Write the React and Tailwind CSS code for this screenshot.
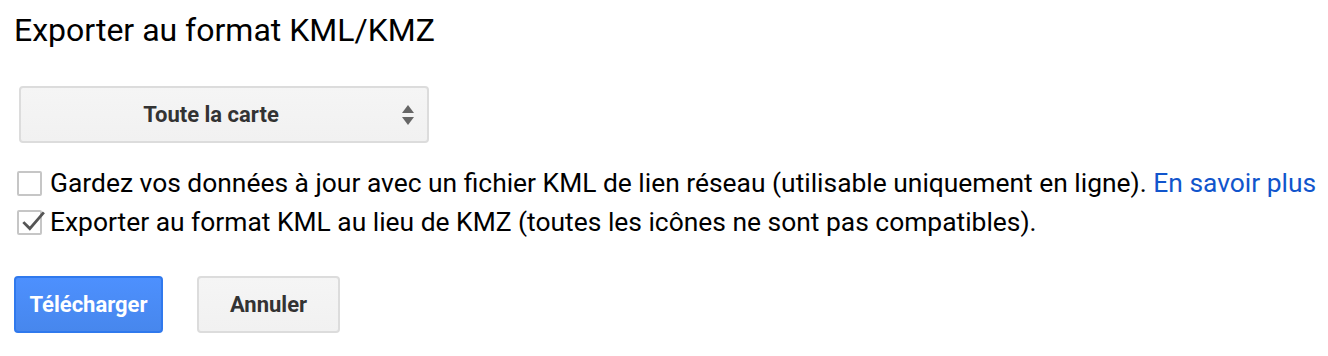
import React, { useState } from 'react';

const Checkbox = ({ checked, onChange }) => (
  <button
    onClick={onChange}
    className="relative w-[25px] h-[25px] shrink-0 border-2 border-[#c6c6c6] rounded-[2px] bg-white"
  >
    {checked && (
      <svg viewBox="0 0 25 25" className="absolute left-[0px] top-[-5px] w-[27px] h-[27px]">
        <path d="M4 14 L10 20 L23 5" fill="none" stroke="#555" strokeWidth="2.6" />
      </svg>
    )}
  </button>
);

export default function App() {
  const [linkKml, setLinkKml] = useState(false);
  const [asKml, setAsKml] = useState(true);

  return (
    <div className="w-[1328px] h-[356px] bg-white text-[#222] font-['Roboto',sans-serif] px-[14px] pt-[12px]">
      <h1 className="text-[32px] leading-[36px] text-black">Exporter au format KML/KMZ</h1>

      <div className="mt-[38px] ml-[5px] w-[410px] h-[57px] pr-[26px] flex items-center justify-center relative border-2 border-[#dcdcdc] rounded-[4px] bg-gradient-to-b from-[#f5f5f5] to-[#f1f1f1]">
        <span className="text-[22px] font-bold text-[#333]">Toute la carte</span>
        <svg viewBox="0 0 14 22" className="absolute right-[12px] top-[16px] w-[14px] h-[22px]">
          <path d="M7 1 L13 9 H1 Z M1 13 H13 L7 21 Z" fill="#666" />
        </svg>
      </div>

      <div className="mt-[25px] flex flex-col gap-[9px] text-[26.4px] leading-[30px] text-black ml-[3px] whitespace-nowrap">
        <label className="flex items-center gap-[8px]">
          <Checkbox checked={linkKml} onChange={() => setLinkKml(!linkKml)} />
          <span>
            Gardez vos données à jour avec un fichier KML de lien réseau (utilisable uniquement en ligne).{' '}
            <a className="text-[#1155cc]">En savoir plus</a>
          </span>
        </label>
        <label className="flex items-center gap-[8px]">
          <Checkbox checked={asKml} onChange={() => setAsKml(!asKml)} />
          <span>Exporter au format KML au lieu de KMZ (toutes les icônes ne sont pas compatibles).</span>
        </label>
      </div>

      <div className="mt-[39px] flex gap-[34px]">
        <button className="w-[149px] h-[57px] rounded-[4px] border-2 border-[#3079ed] bg-gradient-to-b from-[#4d90fe] to-[#4787ed] text-white text-[22px] font-bold">
          Télécharger
        </button>
        <button className="w-[143px] h-[57px] rounded-[4px] border-2 border-[#dcdcdc] bg-gradient-to-b from-[#f5f5f5] to-[#f1f1f1] text-[#333] text-[22px] font-bold">
          Annuler
        </button>
      </div>
    </div>
  );
}
